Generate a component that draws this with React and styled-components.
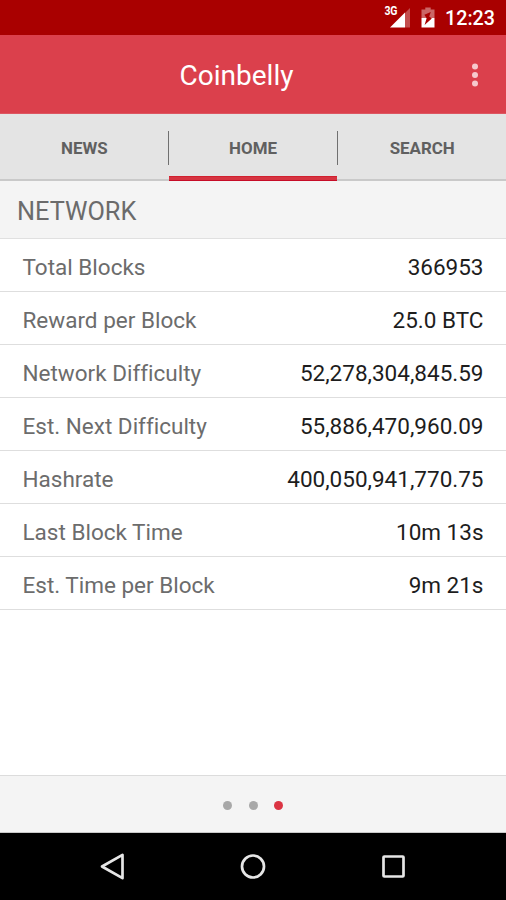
import React from "react";
import styled, { createGlobalStyle } from "styled-components";

const GlobalStyle = createGlobalStyle`
  * {
    box-sizing: border-box;
  }
  body {
    margin: 0;
    font-family: Roboto, "Liberation Sans", sans-serif;
    background: #fff;
  }
`;

const Screen = styled.div`
  display: flex;
  flex-direction: column;
  height: 100vh;
  overflow: hidden;
  background: #fff;
`;

const StatusBar = styled.div`
  display: flex;
  flex: none;
  height: 35px;
  padding-right: 11px;
  align-items: center;
  justify-content: flex-end;
  background: #a90000;
  color: #fff;
`;

const Signal = styled.div`
  display: flex;
  height: 35px;
  margin-right: 10px;
`;

const NetworkType = styled.span`
  margin: 7px -8px 0 0;
  font-size: 10.5px;
  line-height: 12px;
  font-weight: 700;
  letter-spacing: -0.4px;
  transform: scaleY(1.2);
`;

const Clock = styled.span`
  width: 50px;
  margin-left: 10px;
  padding-top: 2px;
  font-size: 19.7px;
  line-height: 24px;
  font-weight: 500;
  text-align: right;
  white-space: nowrap;
`;

const AppBar = styled.header`
  display: grid;
  flex: none;
  grid-template-columns: 33px 1fr 33px;
  align-items: center;
  height: 79px;
  padding-right: 15px;
  background: #db404c;
  border-bottom: 1px solid #dd5661;
  color: #fff;
`;

const AppTitle = styled.h1`
  grid-column: 2;
  margin: 4px 0 0;
  padding-right: 18px;
  font-size: 28px;
  line-height: 34px;
  font-weight: 400;
  text-align: center;
`;

const MenuButton = styled.button`
  display: flex;
  padding: 1px 0 0;
  border: 0;
  background: none;
  justify-content: center;
`;

const Tabs = styled.nav`
  display: flex;
  flex: none;
  height: 67px;
  background: #e4e4e4;
`;

const Tab = styled.button`
  flex: 1;
  padding: 0 0 ${(p) => (p.$active ? 0 : 3)}px;
  border: 0;
  border-bottom: ${(p) => (p.$active ? "0" : "2px solid #c9c9c9")};
  background: none;
  color: #606060;
  font-family: inherit;
  font-size: 16.9px;
  font-weight: 700;
  display: flex;
  flex-direction: column;
  align-items: stretch;
`;

const TabLabel = styled.span`
  height: 34px;
  margin: 17px 0 0 ${(p) => (p.$active ? -1 : 0)}px;
  line-height: 35px;
  text-align: center;
  border-left: ${(p) => (p.$divider ? "1px solid #707070" : "0")};
`;

const Indicator = styled.span`
  height: 5px;
  margin-top: 11px;
  background: #d63441;
  border-bottom: 1px solid #c60c27;
  border-top: 1px solid #d1202f;
`;

const SectionTitle = styled.h2`
  flex: none;
  height: 58px;
  margin: 0;
  padding: 1px 17px 0;
  border-bottom: 1px solid #e0e0e0;
  background: #f4f4f4;
  color: #6b6b6b;
  font-size: 25.3px;
  line-height: 60px;
  font-weight: 400;
`;

const StatList = styled.dl`
  flex: 1;
  margin: 0;
`;

const StatRow = styled.div`
  display: flex;
  justify-content: space-between;
  height: 53px;
  padding: 1px 22.5px 0;
  border-bottom: 1px solid #dedede;
  font-size: 22.5px;
  line-height: 54px;
  font-variant-ligatures: none;
`;

const StatName = styled.dt`
  color: #6c6c6c;
`;

const StatValue = styled.dd`
  margin: 0;
  color: #1d1d1d;
`;

const Pager = styled.div`
  display: flex;
  flex: none;
  gap: 16.5px;
  height: 58px;
  padding-top: 2px;
  align-items: center;
  justify-content: center;
  background: #f4f4f4;
  border-top: 1px solid #dcdcdc;
  border-bottom: 1px solid #c9c9c9;
`;

const Dot = styled.span`
  width: 9px;
  height: 9px;
  border-radius: 50%;
  background: ${(p) => (p.$active ? "#db3443" : "#a8a8a8")};
`;

const NavBar = styled.div`
  display: flex;
  flex: none;
  height: 67px;
  padding: 0 98px;
  align-items: center;
  justify-content: space-between;
  background: #000;
`;

const NavButton = styled.button`
  display: flex;
  padding: 0;
  border: 0;
  background: none;
`;

const tabs = ["NEWS", "HOME", "SEARCH"];

const stats = [
  { name: "Total Blocks", value: "366953" },
  { name: "Reward per Block", value: "25.0 BTC" },
  { name: "Network Difficulty", value: "52,278,304,845.59" },
  { name: "Est. Next Difficulty", value: "55,886,470,960.09" },
  { name: "Hashrate", value: "400,050,941,770.75" },
  { name: "Last Block Time", value: "10m 13s" },
  { name: "Est. Time per Block", value: "9m 21s" },
];

const SignalIcon = () => (
  <svg width="22" height="35" viewBox="0 0 22 35">
    <path d="M16 13 L21 8 V27.5 H16 Z" fill="#fff" fillOpacity="0.3" />
    <path d="M1 27.5 L16 12.5 V27.5 Z" fill="#fff" />
  </svg>
);

// charging: faded above the charge level, bolt cut out of both halves
const BatteryIcon = () => (
  <svg width="14" height="35" viewBox="0 0 14 35">
    <path
      d="M4.3 7.5 H9.7 V9.5 H13.5 V18 H0.5 V9.5 H4.3 Z"
      fill="#fff"
      fillOpacity="0.4"
    />
    <path d="M0.5 18 H13.5 V27.5 H0.5 Z" fill="#fff" />
    <path d="M9.8 12 L3.4 14.8 L5.6 18.2 L3.6 25 L10.8 18.4 L8.2 16.6 Z" fill="#a90000" />
  </svg>
);

const MenuIcon = () => (
  <svg width="8" height="24" viewBox="0 0 8 24" fill="#f6c9cd">
    <circle cx="4" cy="3.5" r="3" />
    <circle cx="4" cy="12" r="3" />
    <circle cx="4" cy="20.5" r="3" />
  </svg>
);

const App = () => {
  return (
    <Screen>
      <GlobalStyle />
      <StatusBar>
        <Signal>
          <NetworkType>3G</NetworkType>
          <SignalIcon />
        </Signal>
        <BatteryIcon />
        <Clock>12:23</Clock>
      </StatusBar>
      <AppBar>
        <AppTitle>Coinbelly</AppTitle>
        <MenuButton aria-label="More options">
          <MenuIcon />
        </MenuButton>
      </AppBar>
      <Tabs>
        {tabs.map((tab, i) => (
          <Tab key={tab} $active={tab === "HOME"}>
            <TabLabel $active={tab === "HOME"} $divider={i > 0}>
              {tab}
            </TabLabel>
            {tab === "HOME" && <Indicator />}
          </Tab>
        ))}
      </Tabs>
      <SectionTitle>NETWORK</SectionTitle>
      <StatList>
        {stats.map((stat) => (
          <StatRow key={stat.name}>
            <StatName>{stat.name}</StatName>
            <StatValue>{stat.value}</StatValue>
          </StatRow>
        ))}
      </StatList>
      <Pager>
        <Dot />
        <Dot />
        <Dot $active />
      </Pager>
      <NavBar>
        <NavButton aria-label="Back">
          <svg width="30" height="30" viewBox="0 0 30 30">
            <path
              d="M4 14.5 L24.5 2.8 V26.2 Z"
              fill="none"
              stroke="#e6e6e6"
              strokeWidth="2.7"
              strokeLinejoin="round"
            />
          </svg>
        </NavButton>
        <NavButton aria-label="Home">
          <svg width="30" height="30" viewBox="0 0 30 30">
            <circle cx="15" cy="14.5" r="11" fill="none" stroke="#e6e6e6" strokeWidth="2.7" />
          </svg>
        </NavButton>
        <NavButton aria-label="Recent apps">
          <svg width="30" height="30" viewBox="0 0 30 30">
            <rect
              x="5.5"
              y="4.5"
              width="20"
              height="20"
              rx="0.8"
              fill="none"
              stroke="#e6e6e6"
              strokeWidth="2.7"
            />
          </svg>
        </NavButton>
      </NavBar>
    </Screen>
  );
};

export default App;
